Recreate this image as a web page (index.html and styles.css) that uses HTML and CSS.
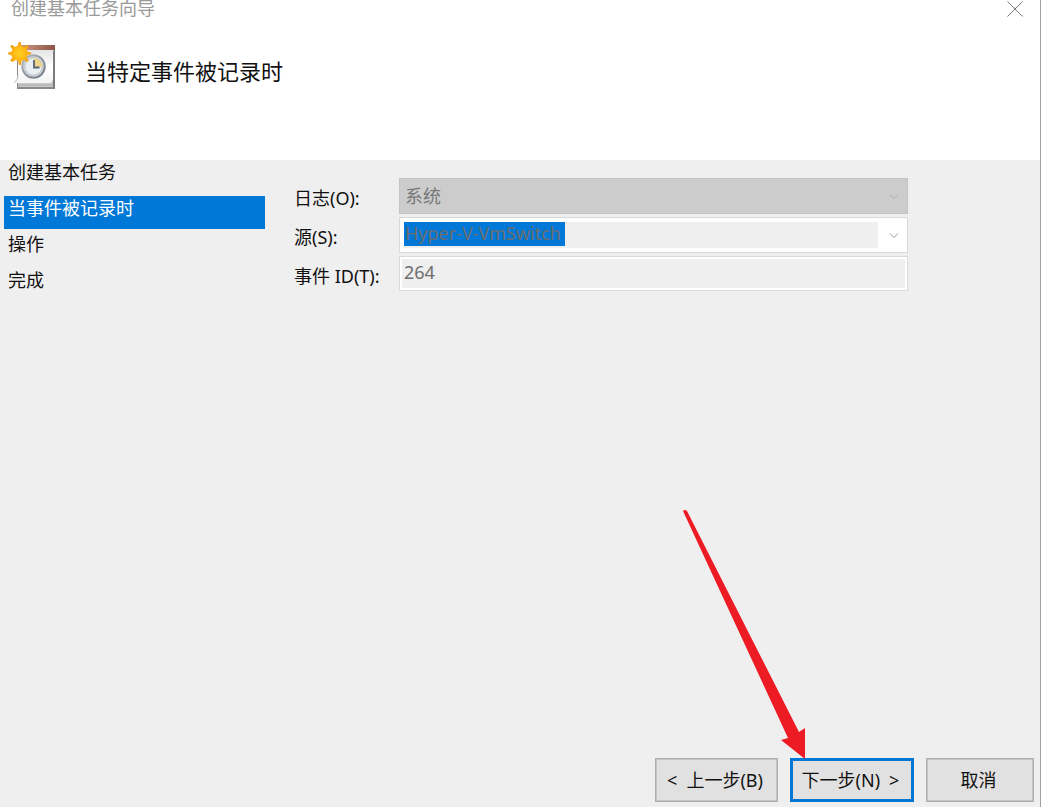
FILE: index.html
```html
<!DOCTYPE html>
<html lang="zh-CN">
<head>
<meta charset="utf-8">
<title>创建基本任务向导</title>
<link rel="stylesheet" href="styles.css">
</head>
<body>
<main class="wizard">
  <header class="banner">
    <div class="titlebar">
      <span class="title">创建基本任务向导</span>
      <button class="close" type="button" aria-label="关闭">
        <svg width="16" height="16" viewBox="0 0 16 16"><path d="M.5 .5l15 15M15.500 .5l-15 15" fill="none" stroke="#777" stroke-width="1"/></svg>
      </button>
    </div>
    <div class="heading">
      <svg class="task-icon" width="48" height="48" viewBox="0 0 48 48" aria-hidden="true">
        <defs>
          <linearGradient id="bar" x1="0" x2="1" y1="0" y2="0"><stop offset="0" stop-color="#d29a86"/><stop offset="1" stop-color="#8d5546"/></linearGradient>
          <linearGradient id="page" x1="0" x2="0" y1="0" y2="1"><stop offset="0" stop-color="#e4e4e4"/><stop offset=".5" stop-color="#fff"/><stop offset="1" stop-color="#f4f4f4"/></linearGradient>
          <linearGradient id="rim" x1="0" x2="1" y1="0" y2="1"><stop offset="0" stop-color="#b3b9bf"/><stop offset="1" stop-color="#6f7780"/></linearGradient>
          <radialGradient id="sun"><stop offset="0" stop-color="#ffd21f"/><stop offset=".6" stop-color="#fdb515"/><stop offset="1" stop-color="#f09a1a"/></radialGradient>
        </defs>
        <path d="M9 9H47V47H9V41Z" fill="#8d8887"/>
        <path d="M10 40H45V45H10Z" fill="#c9c9c9"/>
        <path d="M10 43H45" stroke="#aaa" stroke-width="1"/>
        <path d="M10 8H45V37Q45 41 41 41H6Q10 38 10 33Z" fill="url(#page)"/>
        <path d="M6 41Q10 38 10 33" fill="none" stroke="#bbb"/>
        <path d="M10 3H47V8H10Z" fill="url(#bar)"/>
        <path d="M45.500 8H47V47H45.500Z" fill="#777"/>
        <circle cx="25.500" cy="24.500" r="11.200" fill="#d8dde1" stroke="url(#rim)" stroke-width="2"/>
        <circle cx="25.500" cy="24.500" r="8.800" fill="#e9eef1" stroke="#b6bec5" stroke-width="1"/>
        <path d="M26 25V15.700A9 9 0 0 1 34.300 25Z" fill="#efd58c"/>
        <path d="M26 18V25.500H31.500" fill="none" stroke="#536274" stroke-width="1.800"/>
        <path d="M9.500 0h2l1 4.200 2.600 1.100L19 3l1.500 1.500-2.200 3.700 1 2.300 3.700.9v2l-3.800.9-1.100 2.600 2.100 3.400-1.500 1.500-3.500-2.200-2.500 1.100-1 4.300h-2l-.9-4.300-2.600-1.100-3.600 2.200L.2 20.300l2.300-3.400-1.100-2.600-3.400-.9v-2l3.500-.9 1-2.500L.3 4.500 1.800 3l3.700 2.300 2.700-1.100z" transform="translate(2 0) scale(.92)" fill="url(#sun)"/>
      </svg>
      <h1>当特定事件被记录时</h1>
    </div>
  </header>
  <div class="body">
    <nav class="steps" aria-label="步骤">
      <ol>
        <li>创建基本任务</li>
        <li class="current" aria-current="step">当事件被记录时</li>
        <li>操作</li>
        <li>完成</li>
      </ol>
    </nav>
    <form class="fields">
      <label for="log">日志(O):</label>
      <div class="select-wrap">
        <select id="log" disabled><option>系统</option></select>
        <svg class="chevron" width="10" height="6" viewBox="0 0 10 6"><path d="M1 .5l4 4 4-4" fill="none" stroke="#aaa"/></svg>
      </div>
      <label for="source">源(S):</label>
      <div class="combo">
        <div class="combo-edit"><input id="source" type="text" value="Hyper-V-VmSwitch" disabled></div>
        <button type="button" disabled aria-label="展开">
          <svg width="10" height="6" viewBox="0 0 10 6"><path d="M1 .5l4 4 4-4" fill="none" stroke="#999"/></svg>
        </button>
      </div>
      <label for="event">事件 ID(T):</label>
      <input class="event" id="event" type="text" value="264" disabled>
    </form>
  </div>
  <footer class="actions">
    <button type="button"><span>&lt;</span><span>上一步(B)</span></button>
    <button class="primary" type="button"><span>下一步(N)</span><span>&gt;</span>
      <svg class="pointer" width="126" height="250" viewBox="0 0 126 250" aria-hidden="true"><path d="M3 2Q5 0 7 2L119 223 125 219V250L101 231 108 229Z" fill="#ed1c24"/></svg>
    </button>
    <button type="button">取消</button>
  </footer>
</main>
</body>
</html>
```

FILE: styles.css
```css
* {
  box-sizing: border-box;
}

body {
  margin: 0;
  background: #efefef;
  color: #111;
  font: 18px/24px "Noto Sans", "Noto Sans CJK SC", sans-serif;
}

button,
input,
select {
  margin: 0;
  font: inherit;
}

.wizard {
  display: flex;
  flex-direction: column;
  min-height: 100vh;
  border-right: 1px solid #a0a0a0;
}

.banner {
  height: 160px;
  background: #fff;
}

.titlebar {
  display: flex;
  justify-content: space-between;
  height: 42px;
  padding: 0 17px 0 11px;
}

.title {
  line-height: 17px;
  color: #999;
}

.close {
  height: 18px;
  padding: 1px 0;
  border: 0;
  background: none;
  line-height: 0;
}

.heading {
  display: flex;
  align-items: flex-start;
  gap: 29px;
  padding-left: 8px;
}

.task-icon {
  overflow: visible;
}

h1 {
  margin: 14px 0 0;
  font-size: 22px;
  line-height: 30px;
  font-weight: 400;
}

.body {
  display: flex;
  flex: 1;
}

.steps {
  width: 265px;
  padding-left: 4px;
}

.steps ol {
  margin: 0;
  padding: 0;
  list-style: none;
}

.steps li {
  height: 33px;
  margin-bottom: 3px;
  padding: 0 4px;
}

.steps .current {
  background: #0078d7;
  color: #fff;
}

.fields {
  display: grid;
  grid-template-columns: 105px minmax(0, 509px);
  grid-auto-rows: 36px;
  align-content: start;
  flex: 1;
  gap: 3px 0;
  padding: 18px 20px 0 29px;
}

.fields label {
  padding-top: 8px;
}

.select-wrap {
  position: relative;
}

.select-wrap select {
  width: 100%;
  height: 36px;
  padding: 0 5px;
  border: 1px solid #c4c4c4;
  border-radius: 0;
  background: #ccc;
  color: #777;
  opacity: 1;
  appearance: none;
}

.chevron {
  position: absolute;
  top: 16px;
  right: 9px;
}

.combo {
  display: flex;
  padding: 4px;
  border: 1px solid #d9d9d9;
  background: #fff;
}

.combo-edit {
  flex: 1;
  background: #efefef;
}

.combo input {
  display: block;
  width: 161px;
  height: 24px;
  padding: 0 0 2px 1px;
  border: 0;
  background: #0078d7;
  color: #6d6d6d;
}

.combo button {
  width: 25px;
  padding: 0 0 0 6px;
  border: 0;
  background: none;
  line-height: 0;
}

.event {
  height: 35px;
  padding: 0 4px 4px;
  border: 1px solid #d9d9d9;
  outline: 2px solid #fff;
  outline-offset: -3px;
  background: #efefef;
  color: #6d6d6d;
}

.actions {
  display: flex;
  justify-content: flex-end;
  gap: 12px;
  padding: 0 6px 5px;
}

.actions button {
  display: flex;
  align-items: center;
  justify-content: center;
  gap: 9px;
  width: 108px;
  height: 44px;
  padding: 0 3px 0 0;
  border: 1px solid #adadad;
  outline: 1px solid #c4c4c4;
  outline-offset: -2px;
  background: #e1e1e1;
  color: #111;
  white-space: nowrap;
}

.actions button:first-child {
  width: 123px;
}

.actions .primary {
  position: relative;
  width: 124px;
  border: 3px solid #0078d7;
  outline: 0;
}

.pointer {
  position: absolute;
  right: 105px;
  bottom: 40px;
  pointer-events: none;
}
```
